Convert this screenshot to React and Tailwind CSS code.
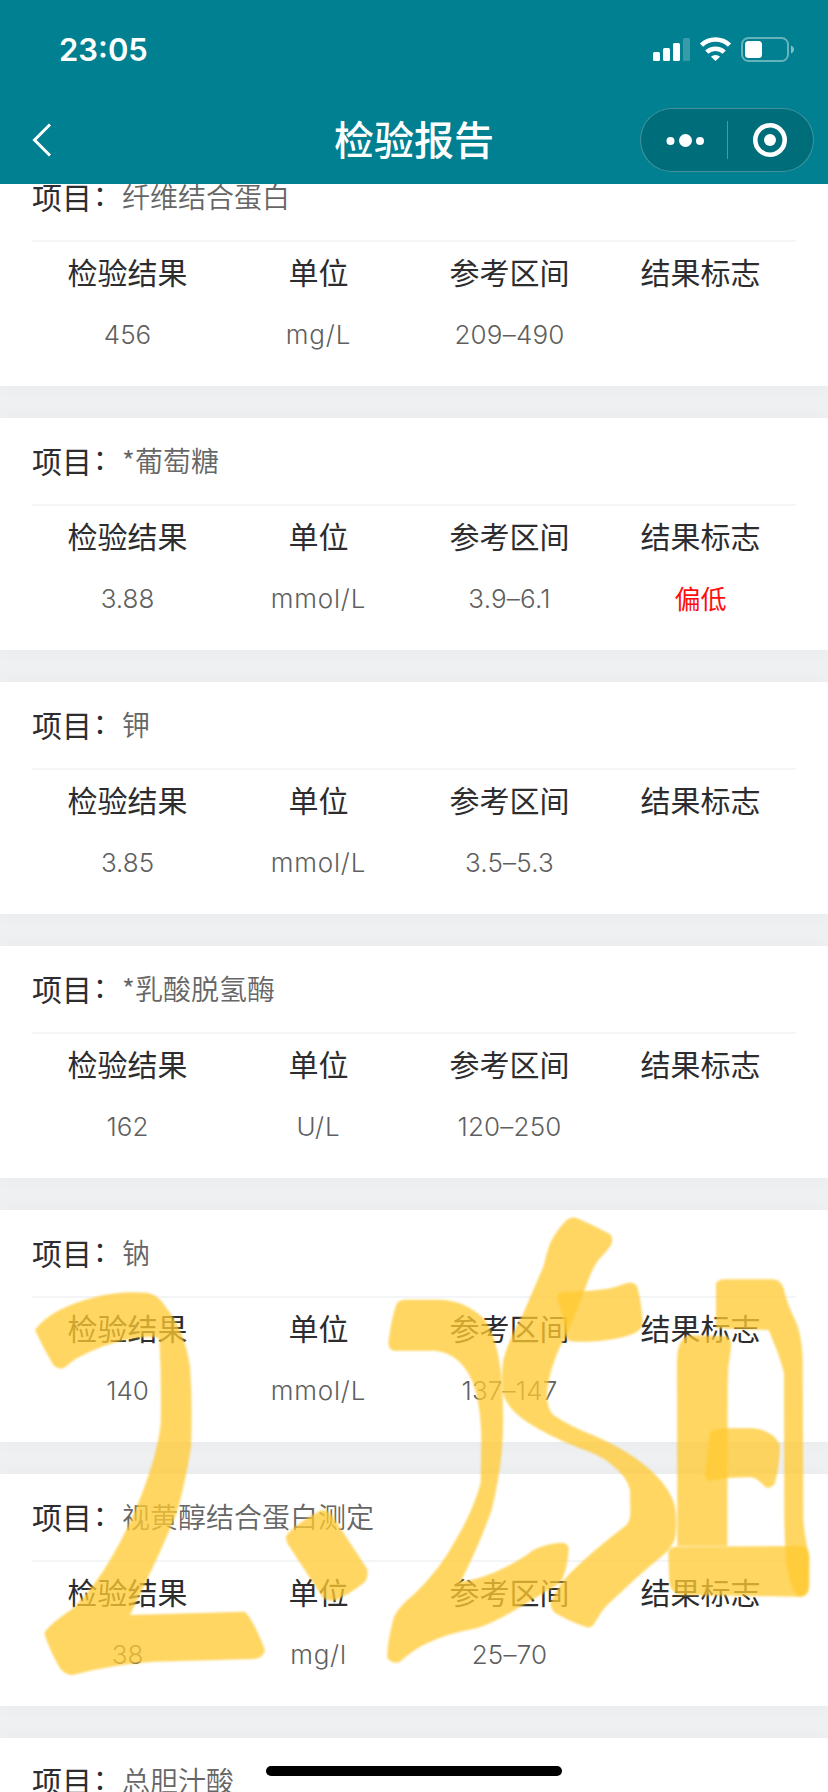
import React from "react";

const reports = [
  { name: "纤维结合蛋白", result: "456", unit: "mg/L", range: "209–490" },
  {
    name: "*葡萄糖",
    result: "3.88",
    unit: "mmol/L",
    range: "3.9–6.1",
    flag: "偏低",
  },
  { name: "钾", result: "3.85", unit: "mmol/L", range: "3.5–5.3" },
  { name: "*乳酸脱氢酶", result: "162", unit: "U/L", range: "120–250" },
  { name: "钠", result: "140", unit: "mmol/L", range: "137–147" },
  { name: "视黄醇结合蛋白测定", result: "38", unit: "mg/l", range: "25–70" },
  { name: "总胆汁酸", result: "", unit: "", range: "" },
];

const columns = ["检验结果", "单位", "参考区间", "结果标志"];

const StatusIcons = () => (
  <svg className="w-[144px] h-[28px]" viewBox="652 36 144 28" fill="none">
    <g fill="#fff">
      <rect x="653" y="52" width="7" height="9" rx="1.5" />
      <rect x="663" y="48" width="7" height="13" rx="1.5" />
      <rect x="673" y="43" width="7" height="18" rx="1.5" />
      <rect x="683" y="38" width="7" height="23" rx="1.5" opacity="0.22" />
    </g>
    <g stroke="#fff" strokeWidth="4.6">
      <path d="M701.5 45.2a20 20 0 0 1 28 0" />
      <path d="M706.8 52.200a12.600 12.600 0 0 1 17.400 0" />
    </g>
    <path d="M715.5 61l-4.6-4.200a6.800 6.800 0 0 1 9.200 0z" fill="#fff" />
    <rect
      x="742"
      y="38"
      width="46"
      height="23"
      rx="6.5"
      stroke="#fff"
      strokeOpacity="0.4"
      strokeWidth="2"
    />
    <rect x="745" y="41" width="17" height="17" rx="3.5" fill="#fff" />
    <path d="M791 45.5c4 1.5 4 6.5 0 8z" fill="#fff" fillOpacity="0.5" />
  </svg>
);

const Header = () => (
  <header className="relative z-10 flex h-[184px] flex-col bg-[#008090] text-white">
    <div className="flex h-[96px] items-center justify-between pl-[59px] pr-[32px] pt-[4px]">
      <span className="pt-px font-['Inter'] text-[31px] font-semibold">
        23:05
      </span>
      <StatusIcons />
    </div>
    <div className="grid h-[88px] grid-cols-[1fr_auto_1fr] items-center">
      <svg className="ml-[32px] h-[36px] w-[20px]" viewBox="0 0 20 36">
        <path
          d="M18 2.5L2.500 18L18 33.500"
          fill="none"
          stroke="#fff"
          strokeWidth="3"
        />
      </svg>
      <h1 className="pb-[4px] text-[40px] font-medium leading-[60px]">
        检验报告
      </h1>
      <div className="mr-[14px] flex h-[64px] w-[174px] items-center justify-self-end rounded-full border border-white/25 bg-black/15">
        <svg className="h-full w-full" viewBox="0 0 172 62" fill="#fff">
          <circle cx="29.500" cy="32" r="4" />
          <circle cx="44.500" cy="31.500" r="6.500" />
          <circle cx="59" cy="32" r="4" />
          <rect x="86" y="12" width="1" height="38" opacity="0.3" />
          <circle
            cx="129"
            cy="31"
            r="14.700"
            fill="none"
            stroke="#fff"
            strokeWidth="4.600"
          />
          <circle cx="129" cy="31" r="6" />
        </svg>
      </div>
    </div>
  </header>
);

const ReportCard = ({ name, result, unit, range, flag }) => (
  <section className="h-[232px] shrink-0 bg-white px-[32px] shadow-[0_0_20px_rgba(0,0,0,0.03)]">
    <div className="flex h-[88px] items-center border-b-2 border-[#f4f5f7] pb-[2px] text-[#2d2d30]">
      <span className="text-[30px]">项目</span>
      <span className="pb-[5px] pl-px pr-px text-[28px]">：</span>
      <span className="text-[28px] font-[350] text-[#666]">{name}</span>
    </div>
    <div className="grid grid-cols-4 text-center">
      {columns.map((label) => (
        <div
          key={label}
          className="pb-[3px] text-[30px] leading-[59px] text-[#2d2d30]"
        >
          {label}
        </div>
      ))}
      <div className="font-['Inter'] text-[26px] font-light leading-[62px] text-[#5f5f5f]">
        {result}
      </div>
      <div className="font-['Inter'] text-[26px] font-light leading-[62px] tracking-[0.8px] text-[#5f5f5f]">
        {unit}
      </div>
      <div className="font-['Inter'] text-[26px] font-light leading-[62px] tracking-[0.2px] text-[#5f5f5f]">
        {range}
      </div>
      <div className="text-[26px] leading-[60px] text-[#ff0d0d]">{flag}</div>
    </div>
  </section>
);

// yellow marker strokes drawn over the list
const Marker = () => (
  <svg
    className="pointer-events-none absolute inset-0 z-20 h-full w-full blur-[0.8px]"
    viewBox="0 0 828 1792"
  >
    <g fill="#ffca31" fillOpacity="0.77">
      <g transform="translate(0 1270) scale(0.33333)">
        <path d="M105 180Q150 115 290 80Q360 62 440 68Q475 72 500 115Q555 185 570 290Q578 400 573 530Q560 620 530 730Q480 850 440 930L390 1035L735 1025Q760 1050 795 1140Q790 1165 760 1167L460 1175Q330 1185 230 1212Q200 1222 180 1195Q150 1145 133 1090Q145 1065 220 1015Q290 940 330 870Q390 770 430 660Q475 540 482 460Q485 330 478 205Q460 195 400 205Q310 220 225 268L195 292Q178 302 160 285Q130 235 105 180Z" />
        <path d="M857 800Q880 765 960 722Q985 712 1005 750L1100 895Q1108 915 1095 935Q1060 965 1010 990Q975 1000 960 970L862 820Z" />
      </g>
      <g transform="translate(380 1200) scale(0.33333)">
        <path d="M50 312Q55 300 75 299L180 299Q260 302 315 360Q350 410 363 520Q375 650 365 760Q355 850 335 930Q300 1030 242 1145Q300 1140 370 1105Q430 1075 460 1050Q500 1030 545 1028Q568 1030 566 1050Q560 1120 540 1148Q515 1165 430 1215Q350 1265 290 1285Q200 1300 130 1335Q100 1350 60 1385Q40 1395 22 1375Q20 1330 42 1250Q60 1215 100 1185Q180 1110 230 1015Q280 930 302 850L304 720Q302 600 275 540Q240 460 165 452L40 452Q22 445 26 420Q35 350 50 312Z" />
        <path d="M560 60Q575 50 590 54Q640 75 690 103Q702 115 693 135Q680 155 655 180Q635 210 625 240L600 305Q560 410 540 440Q505 520 502 570Q498 625 520 645Q570 680 650 710Q740 750 800 800Q870 860 885 920Q892 970 885 1015Q878 1040 850 1065Q770 1130 720 1180Q680 1215 665 1235L640 1275Q630 1288 610 1278Q560 1260 525 1238Q505 1220 515 1200Q540 1150 570 1120Q640 1050 740 975Q752 960 751 930L750 870Q742 830 690 790Q660 765 600 745Q500 705 440 665Q380 625 370 580Q362 530 370 480Q385 420 430 340L490 200Q500 160 510 130Q530 90 560 60Z" />
        <path d="M530 290Q535 275 560 275L620 273Q690 270 730 253Q765 240 773 265Q785 310 788 370Q785 395 750 405Q700 422 620 425Q575 427 562 420Q550 350 530 290Z" />
        <path d="M925 405Q960 408 1040 408Q1058 420 1052 450Q1043 500 1043 550L1042 1038L892 1038L891 480Q892 420 925 405Z" />
        <path d="M1008 250Q1015 238 1035 238L1180 238Q1210 242 1214 280Q1225 320 1245 360Q1265 400 1268 480L1270 960Q1275 1020 1288 1070L1288 1160Q1282 1195 1255 1190Q1230 1165 1220 1100Q1214 1040 1213 960L1212 520Q1205 490 1190 450L1166 390L1008 385Z" />
        <path d="M865 1055Q870 1040 890 1040L1270 1038Q1288 1045 1288 1070L1286 1170Q1280 1192 1255 1190L900 1185Q875 1180 868 1150Z" />
        <path d="M990 695Q1010 685 1040 685L1120 685Q1180 690 1200 735Q1200 790 1185 850Q1170 870 1155 860Q1130 832 1110 832Q1050 830 990 842Q972 840 975 820Z" />
      </g>
    </g>
  </svg>
);

export default function App() {
  return (
    <div className="relative h-[1792px] w-[828px] overflow-hidden bg-[#eff0f2] font-['Noto_Sans_CJK_SC',sans-serif]">
      <Header />
      <main className="-mt-[30px] flex flex-col gap-[32px]">
        {reports.map((report) => (
          <ReportCard key={report.name} {...report} />
        ))}
      </main>
      <Marker />
      <div className="absolute bottom-[16px] left-[266px] z-30 h-[10px] w-[296px] rounded-full bg-black" />
    </div>
  );
}
